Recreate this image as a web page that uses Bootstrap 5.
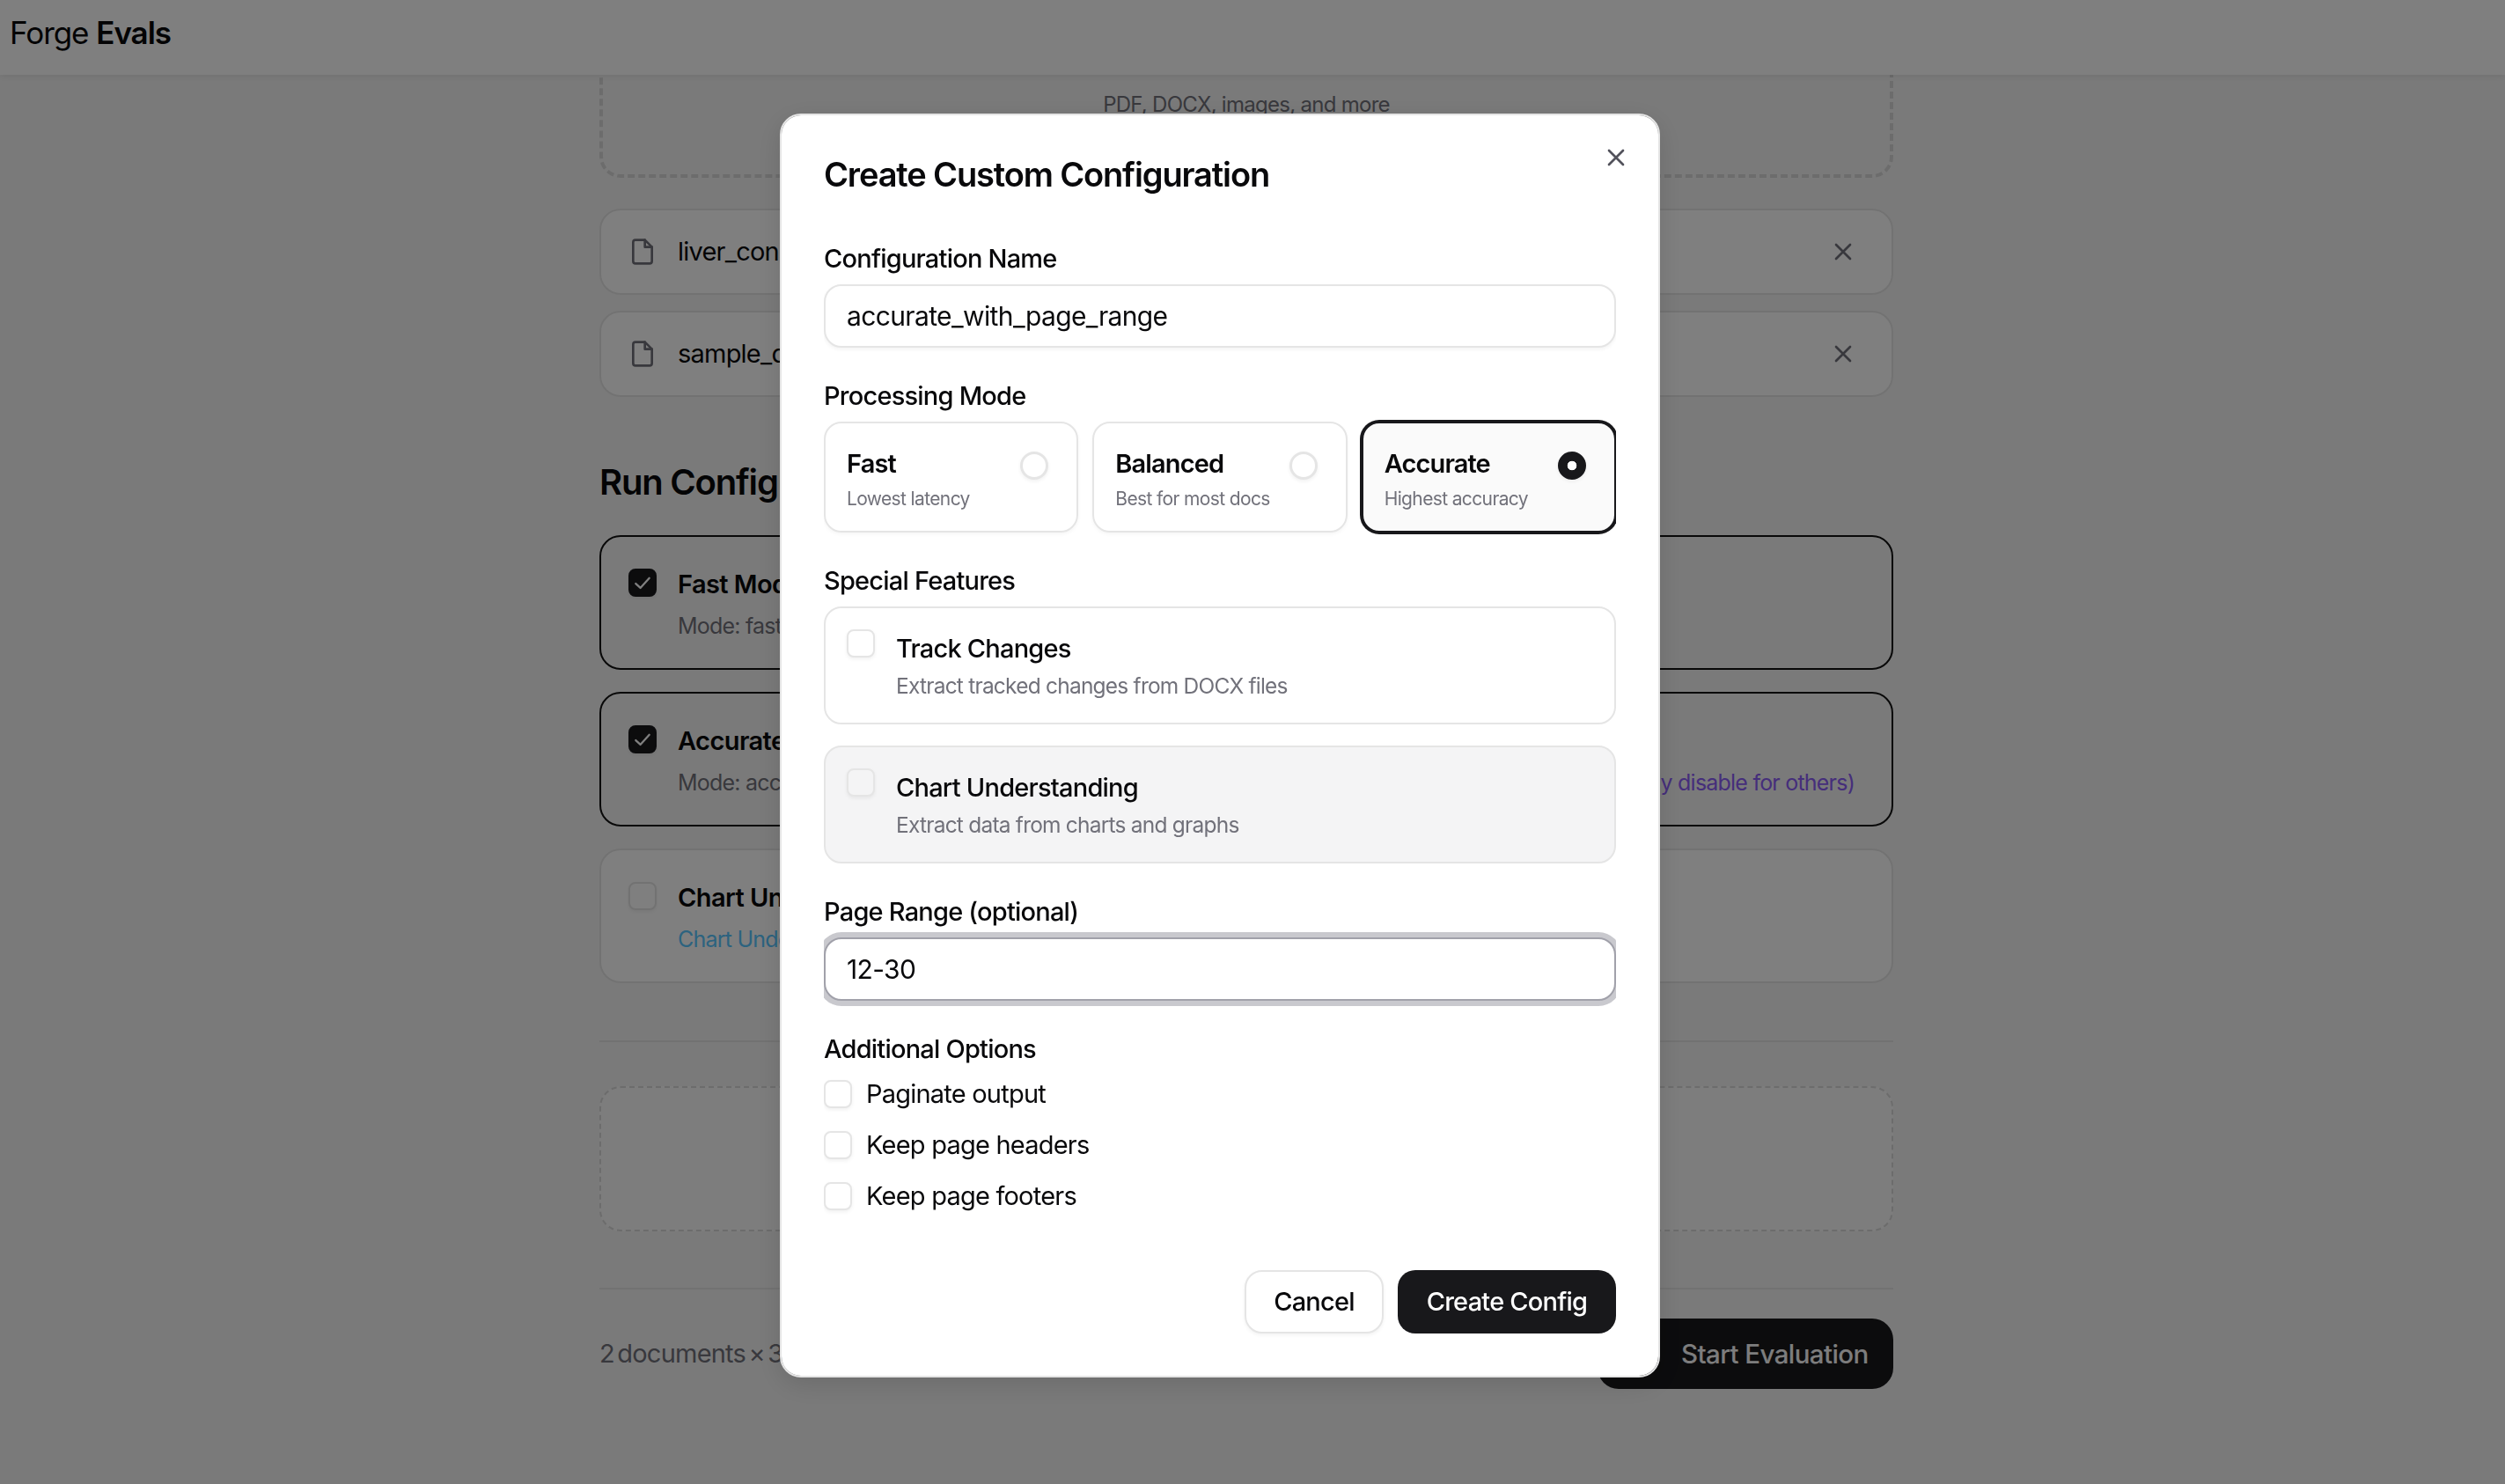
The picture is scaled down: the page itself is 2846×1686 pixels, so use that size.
<!DOCTYPE html>
<html lang="en">
<head>
<meta charset="utf-8">
<title>Forge Evals</title>
<link href="https://cdn.jsdelivr.net/npm/bootstrap@5.3.0/dist/css/bootstrap.min.css" rel="stylesheet">
<style>
html,body{height:100%}
body{background:#f5f5f5;font-family:"Inter","Liberation Sans",sans-serif;color:#09090b;overflow:hidden;font-size:29px;letter-spacing:-.027em}
.topbar{height:85px;padding:0 11px 10px;background:#fff;position:relative;z-index:5;box-shadow:0 2px 8px rgba(0,0,0,.08);font-size:35px;letter-spacing:-.03em}
.topbar .brandEm{font-weight:600}
.pageMain{width:1470px;margin-left:681px;height:calc(100vh - 85px);overflow:hidden}
.dropArea{height:300px;margin-top:-183px;border:4px dashed #d9d9d9;border-radius:24px;padding-bottom:61px;color:#71717a;font-size:24px;line-height:36px;letter-spacing:-.03em;background:#f5f5f5}
.fileBox{height:98px;background:#fff;border:2px solid #e5e5e5;border-radius:24px;padding:0 39px 0 31px;margin-top:18px}
.fileBox.firstFile{margin-top:35px}
.fileBox svg.docIcon{width:32px;height:32px;margin-right:24px}
.xIcon{width:32px;height:32px;color:#71717a}
.runHead{font-size:40px;line-height:56px;font-weight:600;margin:69px 0 32px;letter-spacing:-.03em}
.runBox{height:153px;margin-bottom:25px;background:#fff;border:2px solid #e5e5e5;border-radius:24px;padding:36px 31px 0;gap:24px}
.runBox.isOn{border-color:#111;background:#f5f5f5}
.runTitle{font-weight:600;line-height:36px;letter-spacing:-.02em}
.runSub{color:#71717a;font-size:25px;line-height:36px;margin-top:11px}
.tagBlue{color:#58c6ff}
.tagViolet{color:#8b5cf6;margin-right:11px}
.pageRule{margin:0;border-top:2px solid #e5e5e5;opacity:1}
.ruleA{margin-top:65px}
.addArea{height:165px;margin:50px 0 64px;border:2px dashed #d9d9d9;border-radius:24px;background:#fafafa}
.foot{margin-top:33px;color:#71717a}
.footNote{word-spacing:-4px}
.btnStart{height:80px;width:336px;background:#18181b;color:#fafafa;border:0;border-radius:24px;font-size:29.5px;font-weight:500;padding-left:95px;text-align:left;letter-spacing:-.02em;white-space:nowrap}

.modal-dialog.cfgDialog{max-width:none;width:1000px;margin:129px 0 0 886px}
.cfgDialog .modal-content{border:2px solid #e5e5e5;border-radius:24px;padding:47px 48px 48px;height:1436px;display:block;box-shadow:0 8px 30px rgba(0,0,0,.12)}
.cfgDialog .modal-title{font-size:38px;line-height:40px;font-weight:600;letter-spacing:-.03em}
.closeX{position:absolute;right:32px;top:32px;width:32px;height:32px;padding:0;border:0;background:none;color:#52525b;display:flex}
.closeX svg{width:32px;height:32px}
.cfgBody{margin-top:57px;overflow-x:clip}
.cfgLabel{display:block;line-height:38px;margin-bottom:10px;font-weight:500;color:#09090b}
.cfgGroup{margin-bottom:36px}
.cfgInput.form-control{height:72px;border:2px solid #e5e5e5;border-radius:20px;padding:0 24px;font-size:30px;color:#09090b;letter-spacing:-.021em;box-shadow:0 2px 4px rgba(0,0,0,.05)}
.cfgInput.form-control.hasFocus{border-color:#a1a1aa;box-shadow:0 0 0 6px #c9c9ce}
.modeRow{gap:16px}
.modeOpt{flex:1 1 0;height:126px;border:2px solid #e5e5e5;border-radius:20px;padding:24px;box-shadow:0 2px 4px rgba(0,0,0,.04)}
.modeOpt.picked{background:#fafafa;border-color:#18181b;box-shadow:0 0 0 2px #18181b}
.modeName{line-height:44px;font-weight:600;letter-spacing:-.03em}
.modeHint{font-size:21px;line-height:32px;margin-top:2px;color:#71717a;letter-spacing:-.03em}
.form-check-input.cfgTick{width:32px;height:32px;margin:0;flex:none;border:2px solid #e5e5e5;background-color:#fff;box-shadow:0 2px 4px rgba(0,0,0,.06)}
.modeOpt .form-check-input.cfgTick{margin:8px 8px 0 0;border-width:3px}
.form-check-input.cfgTick[type=checkbox]{border-radius:8px}
.form-check-input.cfgTick:checked{background-color:#18181b;border-color:#18181b}
.form-check-input.cfgTick[type=radio]:checked{background-image:radial-gradient(circle,#fff 5px,transparent 5.6px)}
.form-check-input.cfgTick[type=checkbox]:checked{background-image:url("data:image/svg+xml,%3csvg xmlns='http://www.w3.org/2000/svg' viewBox='0 0 16 16'%3e%3cpath fill='none' stroke='%23fff' stroke-linecap='round' stroke-linejoin='round' stroke-width='1.3' d='M3.6 8.6l3 2.8 5.8-6.4'/%3e%3c/svg%3e")}
.featOpt{height:134px;border:2px solid #e5e5e5;border-radius:20px;padding:24px;gap:24px;margin-bottom:24px}
.featOpt.lastOpt{margin-bottom:0;background:#f4f4f5}
.featOpt.lastOpt .cfgTick{background-color:#f4f4f5}
.featName{line-height:44px;font-weight:500}
.featHint{font-size:24.5px;line-height:38px;color:#71717a;margin-top:1px}
.extraRow{height:44px;gap:16px;margin-bottom:14px}
.cfgActions{margin-top:62px;gap:16px}
.cfgBtn{height:72px;border-radius:20px;font-size:29px;font-weight:500;padding:0 32px;letter-spacing:-.027em}
.cfgBtn.btnGhost{width:158px;padding:0;background:#fff;color:#09090b;border:2px solid #e5e5e5;box-shadow:0 2px 4px rgba(0,0,0,.05)}
.cfgBtn.btnSolid{width:248px;padding:0;background:#18181b;color:#fff;border:0}
</style>
</head>
<body>
<nav class="navbar topbar d-flex align-items-center justify-content-start"><span>Forge <span class="brandEm">Evals</span></span></nav>

<main class="pageMain">
  <div class="dropArea d-flex flex-column justify-content-end align-items-center"><span>PDF, DOCX, images, and more</span></div>

  <div class="fileBox firstFile d-flex align-items-center">
    <svg class="docIcon" viewBox="0 0 24 24" fill="none" stroke="#71717a" stroke-width="2" stroke-linecap="round" stroke-linejoin="round"><path d="M14 2H6a2 2 0 0 0-2 2v16a2 2 0 0 0 2 2h12a2 2 0 0 0 2-2V8z"/><path d="M14 2v6h6"/></svg>
    <span>liver_consultation_report.pdf</span>
    <svg class="xIcon ms-auto" viewBox="0 0 24 24" fill="none" stroke="currentColor" stroke-width="2" stroke-linecap="round"><path d="M18 6L6 18M6 6l12 12"/></svg>
  </div>
  <div class="fileBox d-flex align-items-center">
    <svg class="docIcon" viewBox="0 0 24 24" fill="none" stroke="#71717a" stroke-width="2" stroke-linecap="round" stroke-linejoin="round"><path d="M14 2H6a2 2 0 0 0-2 2v16a2 2 0 0 0 2 2h12a2 2 0 0 0 2-2V8z"/><path d="M14 2v6h6"/></svg>
    <span>sample_document.docx</span>
    <svg class="xIcon ms-auto" viewBox="0 0 24 24" fill="none" stroke="currentColor" stroke-width="2" stroke-linecap="round"><path d="M18 6L6 18M6 6l12 12"/></svg>
  </div>

  <h2 class="runHead">Run Configurations</h2>

  <div class="runBox isOn d-flex align-items-start">
    <input class="form-check-input cfgTick" type="checkbox" checked aria-label="Fast Mode">
    <div class="flex-grow-1"><div class="runTitle">Fast Mode</div><div class="runSub">Mode: fast</div></div>
  </div>
  <div class="runBox isOn d-flex align-items-start">
    <input class="form-check-input cfgTick" type="checkbox" checked aria-label="Accurate Mode">
    <div class="flex-grow-1"><div class="runTitle">Accurate Mode</div><div class="runSub d-flex justify-content-between"><span>Mode: accurate</span><span class="tagViolet">Track Changes (will automatically disable for others)</span></div></div>
  </div>
  <div class="runBox d-flex align-items-start">
    <input class="form-check-input cfgTick" type="checkbox" aria-label="Chart Understanding">
    <div class="flex-grow-1"><div class="runTitle">Chart Understanding</div><div class="runSub tagBlue">Chart Understanding enabled</div></div>
  </div>

  <hr class="pageRule ruleA">
  <div class="addArea"></div>
  <hr class="pageRule">
  <div class="foot d-flex justify-content-between align-items-center">
    <span class="footNote">2 documents × 3 configurations = 6 runs</span>
    <button class="btnStart" type="button">Start Evaluation</button>
  </div>
</main>

<div class="modal-backdrop show"></div>
<div class="modal d-block" tabindex="-1">
  <div class="modal-dialog cfgDialog">
    <div class="modal-content">
      <h5 class="modal-title">Create Custom Configuration</h5>
      <button class="closeX" type="button" aria-label="Close"><svg viewBox="0 0 24 24" fill="none" stroke="currentColor" stroke-width="2" stroke-linecap="round"><path d="M18 6L6 18M6 6l12 12"/></svg></button>
      <div class="cfgBody">
        <div class="cfgGroup">
          <label class="cfgLabel">Configuration Name</label>
          <input class="form-control cfgInput" type="text" value="accurate_with_page_range">
        </div>
        <div class="cfgGroup">
          <label class="cfgLabel">Processing Mode</label>
          <div class="d-flex modeRow">
            <div class="modeOpt d-flex justify-content-between align-items-start">
              <div><div class="modeName">Fast</div><div class="modeHint">Lowest latency</div></div>
              <input class="form-check-input cfgTick" type="radio" name="pm" aria-label="Fast">
            </div>
            <div class="modeOpt d-flex justify-content-between align-items-start">
              <div><div class="modeName">Balanced</div><div class="modeHint">Best for most docs</div></div>
              <input class="form-check-input cfgTick" type="radio" name="pm" aria-label="Balanced">
            </div>
            <div class="modeOpt picked d-flex justify-content-between align-items-start">
              <div><div class="modeName">Accurate</div><div class="modeHint">Highest accuracy</div></div>
              <input class="form-check-input cfgTick" type="radio" name="pm" checked aria-label="Accurate">
            </div>
          </div>
        </div>
        <div class="cfgGroup">
          <label class="cfgLabel">Special Features</label>
          <div class="featOpt d-flex align-items-start">
            <input class="form-check-input cfgTick" type="checkbox" aria-label="Track Changes">
            <div><div class="featName">Track Changes</div><div class="featHint">Extract tracked changes from DOCX files</div></div>
          </div>
          <div class="featOpt lastOpt d-flex align-items-start">
            <input class="form-check-input cfgTick" type="checkbox" aria-label="Chart Understanding">
            <div><div class="featName">Chart Understanding</div><div class="featHint">Extract data from charts and graphs</div></div>
          </div>
        </div>
        <div class="cfgGroup">
          <label class="cfgLabel">Page Range (optional)</label>
          <input class="form-control cfgInput hasFocus" type="text" value="12-30">
        </div>
        <div>
          <label class="cfgLabel">Additional Options</label>
          <div class="extraRow d-flex align-items-center"><input class="form-check-input cfgTick" type="checkbox" aria-label="Paginate output"><span>Paginate output</span></div>
          <div class="extraRow d-flex align-items-center"><input class="form-check-input cfgTick" type="checkbox" aria-label="Keep page headers"><span>Keep page headers</span></div>
          <div class="extraRow d-flex align-items-center"><input class="form-check-input cfgTick" type="checkbox" aria-label="Keep page footers"><span>Keep page footers</span></div>
        </div>
        <div class="cfgActions d-flex justify-content-end">
          <button class="btn cfgBtn btnGhost" type="button">Cancel</button>
          <button class="btn cfgBtn btnSolid" type="button">Create Config</button>
        </div>
      </div>
    </div>
  </div>
</div>
<script src="https://cdn.jsdelivr.net/npm/bootstrap@5.3.0/dist/js/bootstrap.bundle.min.js"></script>
</body>
</html>
